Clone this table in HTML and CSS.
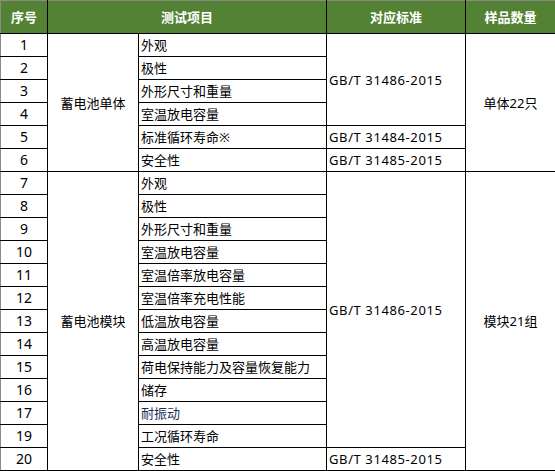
FILE: index.html
```html
<!DOCTYPE html>
<html lang="zh">
<head>
<meta charset="utf-8">
<link rel="stylesheet" href="styles.css">
</head>
<body>
<table class="spec">
  <colgroup>
    <col class="c-no">
    <col class="c-obj">
    <col class="c-item">
    <col class="c-std">
    <col class="c-qty">
  </colgroup>
  <thead>
    <tr class="head">
      <th>序号</th>
      <th colspan="2">测试项目</th>
      <th>对应标准</th>
      <th>样品数量</th>
    </tr>
  </thead>
  <tbody>
    <tr><td class="num">1</td><td class="obj" rowspan="6">蓄电池单体</td><td class="item">外观</td><td class="std" rowspan="4">GB/T 31486-2015</td><td class="qty" rowspan="6">单体22只</td></tr>
    <tr><td class="num">2</td><td class="item">极性</td></tr>
    <tr><td class="num">3</td><td class="item">外形尺寸和重量</td></tr>
    <tr><td class="num">4</td><td class="item">室温放电容量</td></tr>
    <tr><td class="num">5</td><td class="item">标准循环寿命※</td><td class="std">GB/T 31484-2015</td></tr>
    <tr><td class="num">6</td><td class="item">安全性</td><td class="std">GB/T 31485-2015</td></tr>
    <tr><td class="num">7</td><td class="obj" rowspan="13">蓄电池模块</td><td class="item">外观</td><td class="std" rowspan="12">GB/T 31486-2015</td><td class="qty" rowspan="13">模块21组</td></tr>
    <tr><td class="num">8</td><td class="item">极性</td></tr>
    <tr><td class="num">9</td><td class="item">外形尺寸和重量</td></tr>
    <tr><td class="num">10</td><td class="item">室温放电容量</td></tr>
    <tr><td class="num">11</td><td class="item">室温倍率放电容量</td></tr>
    <tr><td class="num">12</td><td class="item">室温倍率充电性能</td></tr>
    <tr><td class="num">13</td><td class="item">低温放电容量</td></tr>
    <tr><td class="num">14</td><td class="item">高温放电容量</td></tr>
    <tr><td class="num">15</td><td class="item">荷电保持能力及容量恢复能力</td></tr>
    <tr><td class="num">16</td><td class="item">储存</td></tr>
    <tr><td class="num">17</td><td class="item blue">耐振动</td></tr>
    <tr><td class="num">19</td><td class="item">工况循环寿命</td></tr>
    <tr><td class="num">20</td><td class="item">安全性</td><td class="std">GB/T 31485-2015</td></tr>
  </tbody>
</table>
</body>
</html>
```

FILE: styles.css
```css
html, body {
  margin: 0;
  padding: 0;
  background: #ffffff;
}

.spec {
  border-collapse: collapse;
  table-layout: fixed;
  width: 555px;
  font-family: "Noto Sans", "Noto Sans CJK SC", sans-serif;
  font-size: 13px;
  color: #000;
  border-top: 1px solid #8a8a8a;
  border-left: 1px solid #8a8a8a;
}

.c-no { width: 47px; }
.c-obj { width: 91px; }
.c-item { width: 188px; }
.c-std { width: 139px; }
.c-qty { width: 90px; }

.spec th,
.spec td {
  border: 1px solid #000;
  padding: 0 2px;
  line-height: 16px;
  white-space: nowrap;
  overflow: hidden;
}

.spec tr:first-child th { border-top-color: #8a8a8a; }
.spec th:first-child,
.spec td.num { border-left-color: #8a8a8a; }

.head {
  height: 33px;
}

.head th {
  background: #548235;
  color: #ffffff;
  font-weight: bold;
  text-align: center;
}

.spec tbody tr {
  height: 23px;
}

.num, .obj, .qty {
  text-align: center;
}

.num {
  font-size: 14px;
}

.item, .std {
  text-align: left;
}

.std {
  letter-spacing: 0.6px;
}

.blue { color: #1f2f5a; }
```
